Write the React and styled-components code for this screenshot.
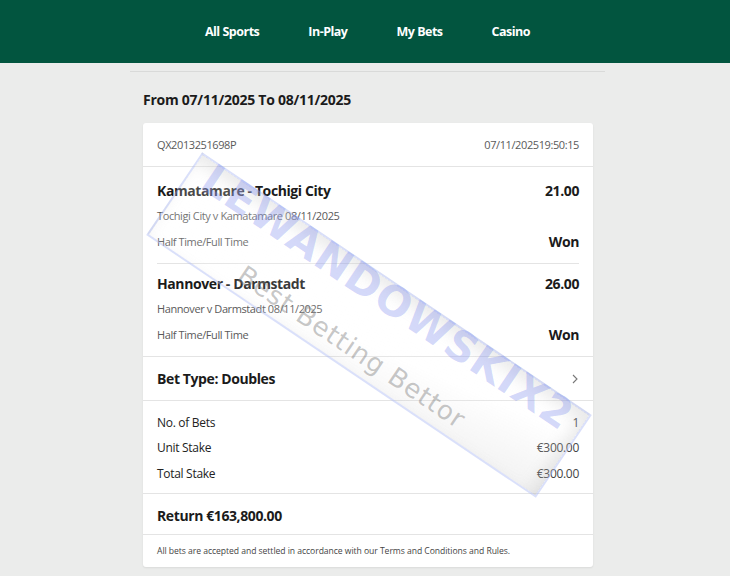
import React from 'react'
import styled, { createGlobalStyle } from 'styled-components'

const GlobalStyle = createGlobalStyle`
  body {
    margin: 0;
    background: #ebeceb;
    font-family: "Open Sans", "Noto Sans", sans-serif;
    color: #1b1b1b;
  }
`

const Header = styled.header`
  background: #02553f;
  height: 63px;
  display: flex;
  justify-content: center;
  align-items: center;
  padding-left: 5px;
`

const Nav = styled.nav`
  display: flex;
  gap: 49px;
`

const NavItem = styled.a`
  color: #fff;
  font-size: 12.5px;
  font-weight: 700;
  letter-spacing: -0.5px;
  text-decoration: none;
`

const Page = styled.div`
  padding-left: 5px;
`

const Container = styled.main`
  width: 475px;
  margin: 8px auto 0;
  border-top: 1px solid #d9dad9;
  padding: 0 12px 10px 13px;
  box-sizing: border-box;
`

const Title = styled.h2`
  margin: 0;
  height: 51px;
  display: flex;
  align-items: center;
  padding-top: 4px;
  box-sizing: border-box;
  font-size: 14px;
  font-weight: 700;
  letter-spacing: -0.25px;
`

const Card = styled.section`
  position: relative;
  background: #fff;
  border-radius: 3px;
  box-shadow: 0 1px 2px rgba(0, 0, 0, 0.08);
  overflow: hidden;
`

const Row = styled.div`
  display: flex;
  justify-content: space-between;
  align-items: center;
  padding: 0 14px;
  height: ${p => p.h}px;
  border-bottom: 1px solid #e4e4e4;
`

const Muted = styled.span`
  font-size: 11px;
  color: #5a5a5a;
  letter-spacing: -0.4px;
`

const Selections = styled.div`
  padding-top: 4px;
  border-bottom: 1px solid #e4e4e4;
`

const Selection = styled.div`
  margin: 0 14px;
  padding: 9px 0 12px;
  border-top: ${p => (p.first ? 'none' : '1px solid #e4e4e4')};
`

const Line = styled.div`
  display: flex;
  justify-content: space-between;
  align-items: center;
  height: ${p => p.h}px;
  margin-top: ${p => p.mt || 0}px;
`

const Strong = styled.span`
  font-size: 14px;
  font-weight: 700;
  letter-spacing: -0.4px;
`

const Stakes = styled.div`
  padding: 12px 14px 11px;
  border-bottom: 1px solid #e4e4e4;
  display: flex;
  flex-direction: column;
  gap: 7.5px;
`

const StakeLine = styled.div`
  display: flex;
  justify-content: space-between;
  align-items: center;
  height: 18px;
  font-size: 12px;
  letter-spacing: -0.3px;
  color: #222;
`

const StakeValue = styled.span`
  color: #444;
`

const Return = styled.div`
  padding: 11px 14px 8px;
  line-height: 20px;
  border-bottom: 1px solid #e4e4e4;
`

const Disclaimer = styled.p`
  margin: 0;
  height: 32px;
  display: flex;
  align-items: center;
  padding: 0 14px;
  font-size: 8.6px;
  color: #444;
  letter-spacing: -0.05px;
`

const Watermark = styled.div`
  position: absolute;
  left: -9px;
  top: 152px;
  width: 470px;
  height: 100px;
  transform: rotate(34deg);
  border: 2px solid rgba(150, 165, 240, 0.35);
  background: linear-gradient(
    170deg,
    rgba(255, 255, 255, 0.25) 0%,
    rgba(255, 255, 255, 0.1) 60%,
    rgba(190, 190, 190, 0.2) 100%
  );
  box-shadow: inset -6px 8px 16px rgba(150, 150, 150, 0.2);
  display: flex;
  flex-direction: column;
  align-items: center;
  justify-content: center;
  gap: 25px;
  padding-bottom: 14px;
  box-sizing: border-box;
  pointer-events: none;
`

const Brand = styled.div`
  font-family: "DejaVu Sans", sans-serif;
  font-weight: 700;
  font-size: 42px;
  line-height: 44px;
  letter-spacing: 1px;
  color: rgba(120, 135, 238, 0.32);
  white-space: nowrap;
`

const Tagline = styled.div`
  font-family: "DejaVu Sans", sans-serif;
  font-size: 26px;
  line-height: 28px;
  letter-spacing: 1px;
  color: rgba(120, 120, 120, 0.42);
  white-space: nowrap;
  margin-left: -4px;
`

const Chevron = () => (
  <svg width="8" height="12" viewBox="0 0 8 12">
    <polyline points="2,2 6,6 2,10" fill="none" stroke="#777" strokeWidth="1.1" />
  </svg>
)

const selections = [
  {
    name: 'Kamatamare - Tochigi City',
    odds: '21.00',
    event: 'Tochigi City v Kamatamare 08/11/2025',
    market: 'Half Time/Full Time',
    result: 'Won'
  },
  {
    name: 'Hannover - Darmstadt',
    odds: '26.00',
    event: 'Hannover v Darmstadt 08/11/2025',
    market: 'Half Time/Full Time',
    result: 'Won'
  }
]

const stakes = [
  ['No. of Bets', '1'],
  ['Unit Stake', '€300.00'],
  ['Total Stake', '€300.00']
]

const App = () => {
  return (
    <>
      <GlobalStyle />
      <Header>
        <Nav>
          <NavItem>All Sports</NavItem>
          <NavItem>In-Play</NavItem>
          <NavItem>My Bets</NavItem>
          <NavItem>Casino</NavItem>
        </Nav>
      </Header>
      <Page>
        <Container>
          <Title>From 07/11/2025 To 08/11/2025</Title>
          <Card>
            <Row h={43}>
              <Muted>QX2013251698P</Muted>
              <Muted>07/11/202519:50:15</Muted>
            </Row>
            <Selections>
              {selections.map((s, i) => (
                <Selection key={s.name} first={i === 0}>
                  <Line h={20}>
                    <Strong>{s.name}</Strong>
                    <Strong>{s.odds}</Strong>
                  </Line>
                  <Line h={18} mt={6}>
                    <Muted>{s.event}</Muted>
                  </Line>
                  <Line h={20} mt={7}>
                    <Muted>{s.market}</Muted>
                    <Strong>{s.result}</Strong>
                  </Line>
                </Selection>
              ))}
            </Selections>
            <Row h={43}>
              <Strong>Bet Type: Doubles</Strong>
              <Chevron />
            </Row>
            <Stakes>
              {stakes.map(([label, value]) => (
                <StakeLine key={label}>
                  <span>{label}</span>
                  <StakeValue>{value}</StakeValue>
                </StakeLine>
              ))}
            </Stakes>
            <Return>
              <Strong>Return €163,800.00</Strong>
            </Return>
            <Disclaimer>
              All bets are accepted and settled in accordance with our Terms and Conditions and Rules.
            </Disclaimer>
            <Watermark>
              <Brand>LEWANDOWSKIX2</Brand>
              <Tagline>Best Betting Bettor</Tagline>
            </Watermark>
          </Card>
        </Container>
      </Page>
    </>
  )
}

export default App
